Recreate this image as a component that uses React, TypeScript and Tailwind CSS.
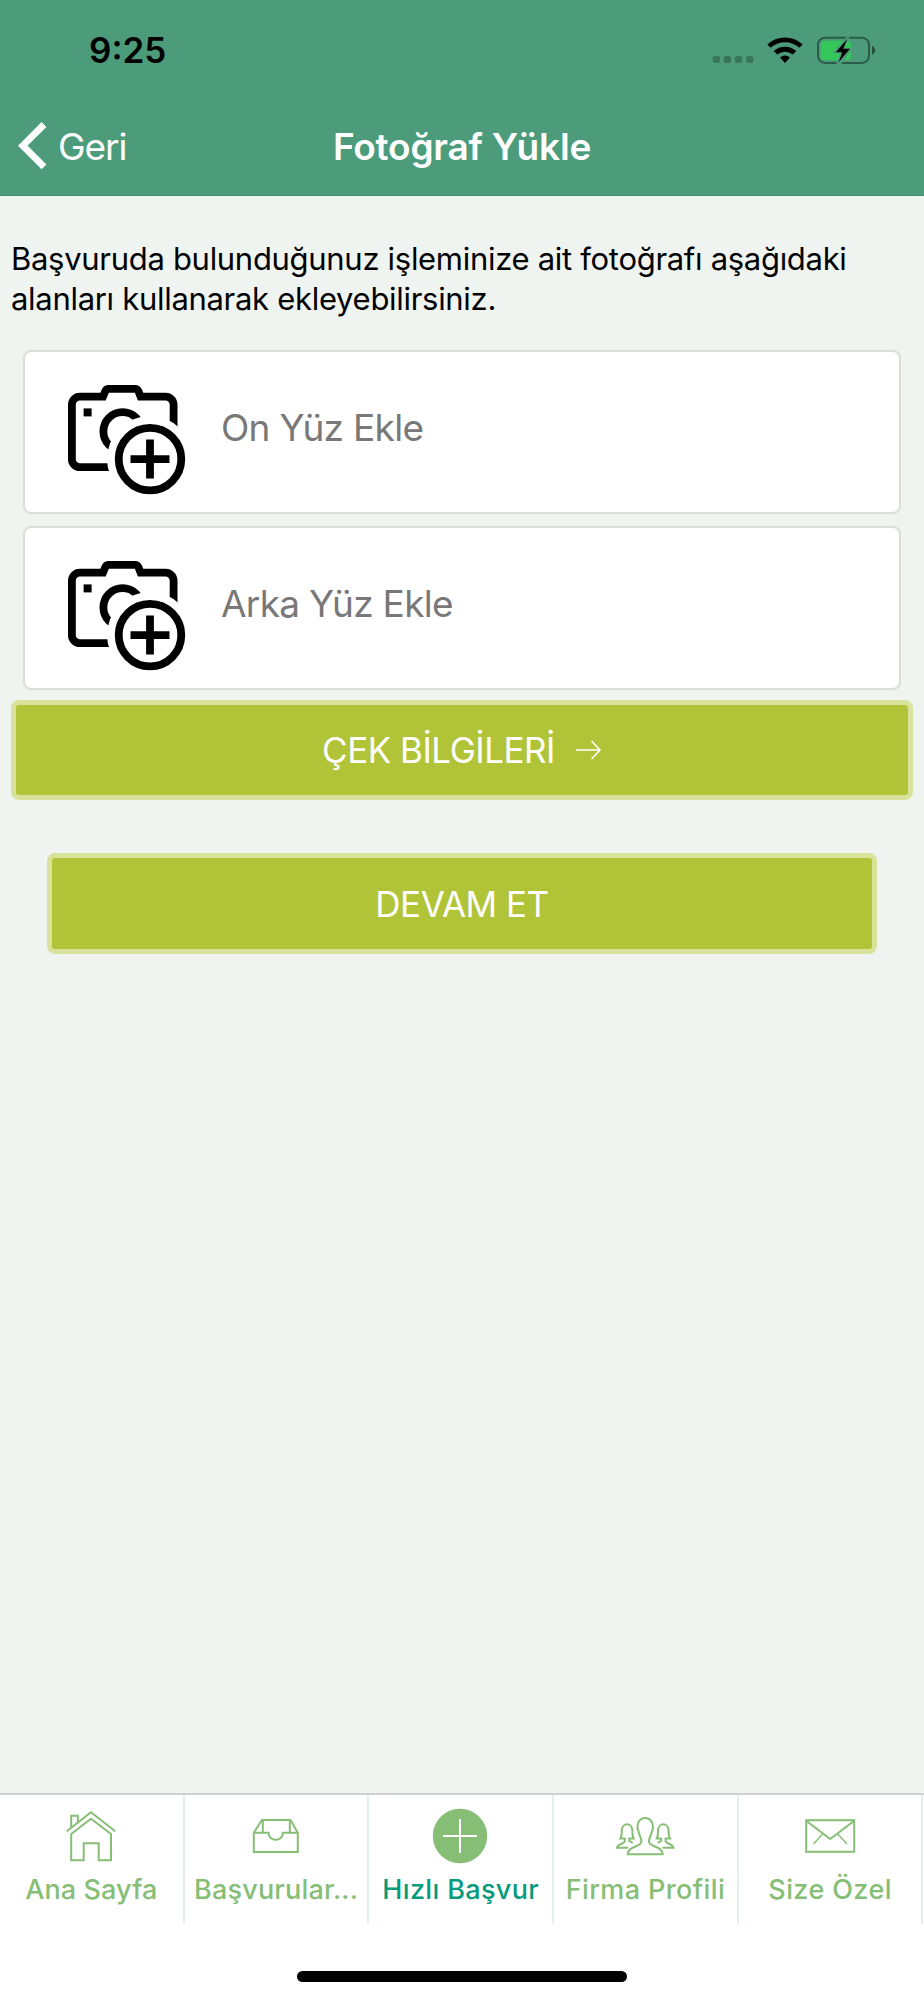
import type { ReactNode } from 'react';

type UploadCardProps = {
  label: string;
};

type Tab = {
  label: string;
  labelClass: string;
  icon: ReactNode;
};

const CameraPlusIcon = () => (
  <svg
    className="mt-[19px]"
    width="120"
    height="112"
    viewBox="0 0 120 112"
    fill="none"
    stroke="#000"
    strokeWidth="7.8"
  >
    <path d="M60 82.2H14A8 8 0 0 1 5.9 74.2V19.7A8 8 0 0 1 14 11.7H37L39.4 5.9A3.6 3.6 0 0 1 43 3.9H68.9A3.6 3.6 0 0 1 72.3 5.9L74.6 11.7H99.5A8 8 0 0 1 107.6 19.7V60" />
    <circle cx="56.6" cy="46.4" r="19.2" />
    <circle cx="84" cy="74.1" r="43" fill="#fff" stroke="none" />
    <circle cx="84" cy="74.1" r="31.3" />
    <path d="M84 54.6V93.6M64.5 74.1H103.5" />
    <rect x="17.6" y="23.4" width="8" height="8" fill="#000" stroke="none" />
  </svg>
);

const UploadCard = ({ label }: UploadCardProps) => (
  <button
    type="button"
    className="flex h-[164px] w-full items-center rounded-lg border-2 border-[#dcdcdc] bg-white pl-[41px] text-left"
  >
    <CameraPlusIcon />
    <span className="-mt-2 ml-[35px] text-[37px] leading-none tracking-[-0.7px] text-[#787878]">
      {label}
    </span>
  </button>
);

const StatusIcons = () => (
  <svg width="170" height="34" viewBox="0 0 170 34">
    <g fill="#000" fillOpacity="0.25">
      <rect x="2.7" y="22" width="7.4" height="7" rx="2.2" />
      <rect x="13.7" y="22" width="7.4" height="7" rx="2.2" />
      <rect x="24.9" y="22" width="7.4" height="7" rx="2.2" />
      <rect x="36.1" y="22" width="7.4" height="7" rx="2.2" />
    </g>
    <path d="M57.3 10.4A26 26 0 0 1 92.7 10.4L89.2 13.8A21 21 0 0 0 60.8 13.8Z" />
    <path d="M63.7 17A17 17 0 0 1 86.3 17L82.7 20.6A12 12 0 0 0 67.3 20.6Z" />
    <path d="M70 23.5A8 8 0 0 1 80 23.5L75 29Z" />
    <rect x="108" y="3.7" width="51" height="25.2" rx="7" fill="none" stroke="#000" strokeOpacity="0.42" strokeWidth="2" />
    <path d="M162 12Q165.3 13.5 165.3 16.3T162 20.8Z" fillOpacity="0.5" />
    <rect x="110.7" y="6.7" width="30.3" height="19.2" rx="4" fill="#34c759" />
    <path d="M137.3 2.2L122.5 19.2H130L126.2 30.5H130.8L143 14H134.7L139.6 2.2Z" fill="#4c9c7c" />
    <path d="M137.2 5L125.8 18.2H132.2L128.6 28.3L140 14.7H133.2Z" />
  </svg>
);

const HomeIcon = () => (
  <>
    <path d="M-24.2 -4.7L0 -23.7L24.2 -4.7" />
    <path d="M-19.8 -8.5V-20.3H-13.2V-13.5" />
    <path d="M-19.8 -2L0 -17.2L20 -2V24.3H7.7V7.3H-7.3V24.3H-19.8Z" />
  </>
);

const InboxIcon = () => (
  <>
    <path d="M-22.2 -3.3L-14 -16H14.5L21.8 -3.3V15.9H-22.2Z" />
    <path d="M-22.2 -3.3H-7.5C-7.5 6 7 6 7 -3.3H21.8M-13.2 -16V-3.3M13.8 -16V-3.3" />
  </>
);

const PlusIcon = () => (
  <>
    <circle r="27.2" fill="#87be76" stroke="none" />
    <path d="M-17 0H17M0 -17V17" stroke="#fff" strokeWidth="2" />
  </>
);

const PeopleIcon = () => (
  <>
    <path d="M-17.3 18.2C-17 9.5 -3.6 11.5 -3.6 5.5C-3.6 1 -6 0 -6.5 -5C-8 -6.5 -7.5 -9 -7.5 -10C-7.5 -20.8 7.9 -20.8 7.9 -10C7.9 -9 8.4 -6.5 6.9 -5C6.4 0 4 1 4 5.5C4 11.5 17.4 9.5 17.7 18.2Z" />
    <path d="M-17 11.7H-28C-27 7.5 -20.4 8 -20.2 5V2.6H-24.6C-23 0 -23.2 -3 -23.2 -5.5C-22.8 -13.8 -13 -13.8 -12.6 -5.5C-12.6 -3 -12.9 0 -11.4 2.6H-15.8V5L-12.2 6.8" />
    <path d="M17.4 11.7H28.4C27.4 7.5 20.8 8 20.6 5V2.6H25C23.4 0 23.6 -3 23.6 -5.5C23.2 -13.8 13.4 -13.8 13 -5.5C13 -3 13.3 0 11.8 2.6H16.2V5L12.6 6.8" />
  </>
);

const MailIcon = () => (
  <>
    <rect x="-23.8" y="-15.8" width="48" height="31.6" />
    <path d="M-23.8 -15.3L0.2 3L24.2 -15.3" />
    <path d="M-7.5 -2L-16.5 8M7.9 -2L16.9 8" strokeWidth="1.4" />
  </>
);

const tabs: Tab[] = [
  { label: 'Ana Sayfa', labelClass: 'text-[#87be76] tracking-[0.1px]', icon: <HomeIcon /> },
  { label: 'Başvurular...', labelClass: 'text-[#87be76] tracking-[0.2px]', icon: <InboxIcon /> },
  { label: 'Hızlı Başvur', labelClass: 'text-[#079b7d] tracking-[0.35px]', icon: <PlusIcon /> },
  { label: 'Firma Profili', labelClass: 'text-[#87be76] tracking-[0.4px]', icon: <PeopleIcon /> },
  { label: 'Size Özel', labelClass: 'text-[#87be76] tracking-[0.4px]', icon: <MailIcon /> },
];

export default function App() {
  return (
    <div className="flex h-[2000px] w-[924px] flex-col overflow-hidden bg-[#f0f4f1] font-['Inter',sans-serif] text-black">
      <header className="h-[196px] shrink-0 border-b border-[#438c70] bg-[#4c9c7c]">
        <div className="flex h-[101px] items-center justify-between pl-[89px] pr-[44px]">
          <span className="text-[35px] font-semibold leading-none">9:25</span>
          <StatusIcons />
        </div>
        <div className="grid h-[91px] grid-cols-[200px_1fr_200px] items-center text-white">
          <button type="button" className="flex items-center pl-[18px]">
            <svg width="30" height="50" viewBox="0 0 30 50" fill="none" stroke="#fff" strokeWidth="6.8">
              <path d="M26 2.5L4.8 23.7L26 44.9" />
            </svg>
            <span className="ml-[10px] text-[37px] leading-none tracking-[-1.1px]">Geri</span>
          </button>
          <h1 className="whitespace-nowrap text-center text-[37px] font-semibold leading-none tracking-[-0.2px]">
            Fotoğraf Yükle
          </h1>
        </div>
      </header>

      <main className="flex flex-1 flex-col px-[11px] pt-[43px]">
        <p className="whitespace-nowrap text-[31px] leading-[40.3px] tracking-[-0.3px]">
          Başvuruda bulunduğunuz işleminize ait fotoğrafı aşağıdaki
          <br />
          alanları kullanarak ekleyebilirsiniz.
        </p>

        <div className="mt-[30.4px] flex flex-col gap-3 px-3">
          <UploadCard label="On Yüz Ekle" />
          <UploadCard label="Arka Yüz Ekle" />
        </div>

        <button
          type="button"
          className="mt-[10px] flex h-[100px] shrink-0 items-center justify-center rounded-lg border-[5px] border-[#d9e29b] bg-[#b1c437] pt-0.5 text-white"
        >
          <span className="text-[35px] leading-none tracking-[-0.5px]">ÇEK BİLGİLERİ</span>
          <svg
            className="-mt-0.5 ml-[20px]"
            width="27"
            height="24"
            viewBox="0 0 27 24"
            fill="none"
            stroke="#fff"
            strokeWidth="1.6"
          >
            <path d="M1 12H25M16.5 3L25 12L16.5 21" />
          </svg>
        </button>

        <button
          type="button"
          className="mx-9 mt-[53px] flex h-[101px] shrink-0 items-center justify-center rounded-lg border-[5px] border-[#d9e29b] bg-[#b1c437] pt-0.5 text-[35px] leading-none tracking-[-0.5px] text-white"
        >
          DEVAM ET
        </button>
      </main>

      <footer className="flex h-[207px] shrink-0 flex-col items-center border-t-2 border-[#cfd2d0] bg-white">
        <nav className="flex w-full">
          {tabs.map((tab) => (
            <button
              key={tab.label}
              type="button"
              className="flex h-[129px] w-[184.7px] shrink-0 flex-col items-center border-r-2 border-[#e4f0ec] pt-[11px]"
            >
              <svg
                className="-ml-px"
                width="60"
                height="60"
                viewBox="-30 -30 60 60"
                fill="none"
                stroke="#87be76"
                strokeWidth="2"
              >
                {tab.icon}
              </svg>
              <span className={`mt-[10px] whitespace-nowrap text-[27px] font-medium leading-[27px] ${tab.labelClass}`}>
                {tab.label}
              </span>
            </button>
          ))}
        </nav>
        <div className="mt-[47px] h-[11px] w-[330px] rounded-full bg-black" />
      </footer>
    </div>
  );
}
